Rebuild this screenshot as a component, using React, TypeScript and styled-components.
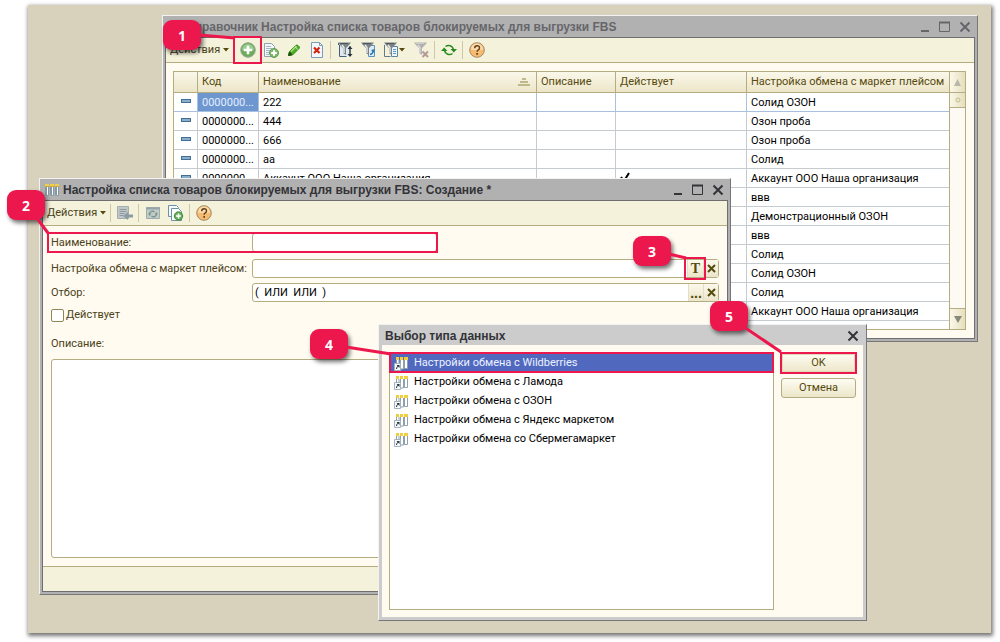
import React from 'react';
import styled, { createGlobalStyle, css } from 'styled-components';

const accent = '#ec174c';
const line = '#b5ac82';
const ink = '#4a4219';

const GlobalStyle = createGlobalStyle`
  *, *::before, *::after { box-sizing: border-box; }
  body {
    margin: 0;
    background: #ffffff;
    color: #000000;
    font: 11px/18px Roboto, "Liberation Sans", sans-serif;
  }
  button, input, textarea { font: inherit; color: inherit; margin: 0; padding: 0; }
`;

const marked = css`
  outline: 2px solid ${accent};
  z-index: 1;
`;

const Page = styled.main`
  display: flex;
  min-height: 100vh;
  padding: 5px 9px 9px 28px;
`;

const Desktop = styled.div`
  position: relative;
  flex: 1;
  min-width: 940px;
  min-height: 620px;
  background: #d8d2bc;
  box-shadow: 1px 2px 4px 1px #777777;
`;

/* Windows */

const Frame = styled.section<{ $light?: boolean }>`
  position: absolute;
  display: flex;
  flex-direction: column;
  padding: ${(p) => (p.$light ? '0 3px 3px' : '0 2px 2px')};
  background: ${(p) => (p.$light ? '#cccccc' : '#b1b1b1')};
  border: 1px solid #77777a;
  border-top-color: #f2f2f2;
  border-left-color: #f2f2f2;
`;

const CatalogFrame = styled(Frame)`
  top: 10px;
  left: 134px;
  right: 13px;
`;

const FormFrame = styled(Frame)`
  top: 173px;
  left: 11px;
  right: 260px;
`;

const PickerFrame = styled(Frame)`
  top: 319px;
  right: 124px;
  width: 489px;
`;

const TitleBar = styled.header<{ $inactive?: boolean; $compact?: boolean }>`
  display: flex;
  align-items: center;
  gap: 4px;
  height: ${(p) => (p.$compact ? 20 : 21)}px;
  padding: 1px 2px 0 3px;
  color: ${(p) => (p.$inactive ? '#66666a' : '#333338')};
`;

const Title = styled.h2`
  flex: 1;
  margin: 0;
  font: bold 12px/20px "Liberation Sans", Arial, sans-serif;
  white-space: nowrap;
`;

const TitleButtons = styled.div`
  display: flex;
  gap: 4px;
`;

const TitleButton = styled.button`
  display: flex;
  width: 16px;
  height: 16px;
  align-items: center;
  justify-content: center;
  border: 0;
  background: none;
`;

const Client = styled.div<{ $plain?: boolean }>`
  display: flex;
  flex-direction: column;
  background: #fffbf0;
  border: ${(p) => (p.$plain ? '0' : '1px solid #6f6f72')};
`;

/* Toolbar */

const Toolbar = styled.div`
  display: flex;
  align-items: center;
  height: 25px;
  background: #f5f2dc;
  border-bottom: 1px solid ${line};
`;

const MenuButton = styled.button`
  display: flex;
  align-items: center;
  justify-content: space-between;
  width: 65px;
  height: 22px;
  padding: 0 2px 0 4px;
  border: 0;
  background: none;
  color: ${ink};
`;

const ToolButton = styled.button<{ $marked?: boolean; $menu?: boolean }>`
  position: relative;
  display: flex;
  align-items: center;
  justify-content: center;
  width: ${(p) => (p.$menu ? 30 : 23)}px;
  height: 22px;
  border: 0;
  background: none;
  ${(p) => p.$marked && css`${marked} outline-offset: 1px;`}
`;

const Separator = styled.span`
  width: 1px;
  height: 18px;
  margin: 0 2px;
  background: #cdc7a6;
`;

/* Catalog table */

const CatalogBody = styled.div`
  display: flex;
  margin: 8px 8px 8px 7px;
  border: 1px solid ${line};
  background: #ffffff;
`;

const GridViewport = styled.div`
  flex: 1;
  height: 257px;
  overflow: hidden;
`;

const Grid = styled.table`
  width: 100%;
  table-layout: fixed;
  border-collapse: separate;
  border-spacing: 0;
`;

const HeadCell = styled.th<{ $width?: number }>`
  width: ${(p) => (p.$width ? `${p.$width}px` : 'auto')};
  height: 21px;
  padding: 0 4px;
  border-right: 1px solid ${line};
  border-bottom: 1px solid ${line};
  background: linear-gradient(#faf8ea, #ece5c8);
  color: #574a0e;
  font-weight: 400;
  text-align: left;
  white-space: nowrap;
  &:last-child { border-right: 0; }
`;

const HeadSorted = styled.span`
  display: flex;
  align-items: center;
  justify-content: space-between;
  padding-right: 2px;
`;

const Cell = styled.td<{ $current?: boolean; $selected?: boolean }>`
  height: 19px;
  padding: 2px 4px 0;
  line-height: 16px;
  overflow: hidden;
  white-space: nowrap;
  border-right: 1px solid ${(p) => (p.$current ? '#a9c1e0' : '#c6cbd0')};
  border-bottom: 1px solid ${(p) => (p.$current ? '#a9c1e0' : '#c6cbd0')};
  background: ${(p) => (p.$selected ? '#6e97cf' : '#ffffff')};
  color: ${(p) => (p.$selected ? '#e4eeff' : '#000000')};
  &:last-child { border-right: 0; }
`;

const Dash = styled.span`
  display: block;
  width: 10px;
  height: 4px;
  margin: 0 auto 4px 3px;
  border: 1px solid #456f92;
  background: #87b0cf;
`;

const ScrollBar = styled.div`
  display: flex;
  flex-direction: column;
  width: 16px;
  border-left: 1px solid ${line};
  background: #fcfaf3;
`;

const ScrollButton = styled.button<{ $height: number; $end?: boolean }>`
  display: flex;
  align-items: center;
  justify-content: center;
  height: ${(p) => p.$height}px;
  border: 0 solid ${line};
  border-width: ${(p) => (p.$end ? '1px 0 0' : '0 0 1px')};
  margin-top: ${(p) => (p.$end ? 'auto' : '0')};
  background: linear-gradient(90deg, #faf8e8, #e6dfbd);
`;

/* Item form */

const Form = styled.form`
  display: flex;
  flex-direction: column;
  padding: 6px 8px 8px;
  color: ${ink};
`;

const FieldRow = styled.div<{ $marked?: boolean }>`
  position: relative;
  display: grid;
  grid-template-columns: 201px 1fr;
  align-items: center;
  margin-bottom: 5px;
  white-space: nowrap;
  ${(p) => p.$marked && css`
    ${marked}
    outline-offset: -2px;
    height: 21px;
    margin: 0 281px 6px -4px;
    padding: 0 1px 0 4px;
  `}
`;

const FieldBox = styled.div`
  display: flex;
  height: 19px;
  border: 1px solid ${line};
  border-radius: 3px;
  background: #ffffff;
`;

const TextInput = styled.input`
  flex: 1;
  min-width: 0;
  padding: 0 2px;
  border: 0;
  background: none;
  color: #000000;
  white-space: pre;
`;

const FieldButton = styled.button<{ $marked?: boolean; $serif?: boolean }>`
  position: relative;
  display: flex;
  flex: none;
  width: ${(p) => (p.$serif ? 16 : 15)}px;
  align-items: center;
  justify-content: center;
  border: 0;
  border-left: 1px solid #e4dfc4;
  background: linear-gradient(#fbf9ec, #ebe5c9);
  color: #574a0e;
  font: ${(p) => (p.$serif ? 'bold 14px/16px "Liberation Serif"' : 'bold 14px/16px "Liberation Sans"')}, serif;
  ${(p) => p.$marked && css`${marked} outline-offset: 1px;`}
`;

const CheckRow = styled.div`
  display: flex;
  align-items: center;
  gap: 2px;
  height: 16px;
  margin-bottom: 12px;
`;

const CheckBox = styled.input`
  appearance: none;
  width: 13px;
  height: 13px;
  border: 1px solid #8f8657;
  border-radius: 2px;
  background: #ffffff;
`;

const NotesLabel = styled.label`
  height: 24px;
`;

const Notes = styled.textarea`
  height: 199px;
  border: 1px solid ${line};
  border-radius: 3px;
  background: #ffffff;
  resize: none;
`;

const FormFooter = styled.footer`
  height: 25px;
  border-top: 1px solid ${line};
  background: #f5f2dc;
`;

/* Type picker */

const PickerBody = styled.div`
  display: flex;
  align-items: flex-start;
  gap: 7px;
  padding: 7px;
`;

const TypeList = styled.ul`
  flex: 1;
  height: 258px;
  margin: 0;
  padding: 0;
  border: 1px solid ${line};
  background: #ffffff;
  list-style: none;
`;

const TypeItem = styled.li<{ $selected?: boolean }>`
  position: relative;
  display: flex;
  align-items: center;
  gap: 5px;
  height: 19px;
  padding: 1px 4px 0;
  color: ${(p) => (p.$selected ? '#eef1ff' : '#000000')};
  background: ${(p) => (p.$selected ? '#5069bf' : 'transparent')};
  ${(p) => p.$selected && css`${marked} outline-offset: -1px;`}
`;

const Actions = styled.div`
  display: flex;
  flex-direction: column;
  gap: 5px;
  width: 75px;
  padding-top: 1px;
`;

const ActionButton = styled.button<{ $marked?: boolean }>`
  position: relative;
  height: 20px;
  border: 1px solid ${line};
  border-radius: 3px;
  background: linear-gradient(#fdfcf2, #ece6c9);
  color: #574a0e;
  ${(p) => p.$marked && css`
    border-radius: 0;
    box-shadow: inset 0 0 0 1px #e0d9b8;
    ${marked}
    outline-offset: -1px;
  `}
`;

/* Numbered callouts lying over the windows */

const Callout = styled.div`
  position: absolute;
  z-index: 2;
  width: 38px;
  height: 30px;
  border-radius: 9px;
  background: ${accent};
  box-shadow: 2px 3px 4px rgba(0, 0, 0, 0.55);
  color: #ffffff;
  font: bold 14px/31px "Open Sans", "Noto Sans", sans-serif;
  text-align: center;
`;

const CalloutActions = styled(Callout)` top: 4px; left: 0; `;
const CalloutName = styled(Callout)` top: 11px; left: -33px; `;
const CalloutType = styled(Callout)` top: 57px; right: 59px; `;
const CalloutItem = styled(Callout)` top: 4px; left: -69px; `;
const CalloutOk = styled(Callout)` top: -24px; right: 118px; `;

const Pointer = styled.svg`
  position: absolute;
  top: 0;
  left: 0;
  overflow: visible;
  z-index: -1;
`;

function PointerLine({ from, to }: { from: [number, number]; to: [number, number] }) {
  return (
    <Pointer width="38" height="30" aria-hidden="true">
      <line x1={from[0]} y1={from[1]} x2={to[0]} y2={to[1]} stroke={accent} strokeWidth="3" />
    </Pointer>
  );
}

/* Icons */

const Icon = ({ children, w = 16, h = 16 }: { children: React.ReactNode; w?: number; h?: number }) => (
  <svg width={w} height={h} viewBox={`0 0 ${w} ${h}`} fill="none" aria-hidden="true">{children}</svg>
);

const Caret = () => <Icon w={6} h={4}><path d="M0 0h6L3 3.500z" fill="#574a0e" /></Icon>;

const MinimizeIcon = () => <Icon><path d="M4 12h8" stroke="currentColor" strokeWidth="2" /></Icon>;
const MaximizeIcon = () => (
  <Icon><path d="M2.500 3.500h10v9h-10z" stroke="currentColor" /><path d="M2 3.500h11" stroke="currentColor" strokeWidth="2" /></Icon>
);
const CloseIcon = () => <Icon><path d="M3.500 3.500l9 9M12.500 3.500l-9 9" stroke="currentColor" strokeWidth="2" /></Icon>;

const AddIcon = () => (
  <Icon>
    <circle cx="8" cy="8" r="7.300" fill="#6cab5e" stroke="#9aa892" />
    <path d="M2 8a6 6 0 0 1 12 0q-6 2-12 0z" fill="#9ccb90" />
    <path d="M8 3.800v8.400M3.800 8h8.400" stroke="#ffffff" strokeWidth="2.600" />
  </Icon>
);

const CopyAddIcon = () => (
  <Icon>
    <path d="M1.500 1.500h7l3 3v10h-10z" fill="#f3f7fa" stroke="#8ea2b2" />
    <path d="M3 4.500h5M3 6.500h6M3 8.500h6M3 10.500h4M3 12.500h3" stroke="#a5b6c4" />
    <circle cx="11" cy="11" r="4.500" fill="#7dba6e" stroke="#649a59" />
    <path d="M11 8.200v5.600M8.200 11h5.600" stroke="#ffffff" strokeWidth="2" />
  </Icon>
);

const PencilIcon = () => (
  <Icon>
    <path d="M2.500 13.500l1-4 6.500-6q1-1 2 0l1 1q1 1 0 2l-6.500 6.500z" fill="#4fae26" stroke="#2c8a12" />
    <path d="M5 9.500l5.500-5.200" stroke="#a2e07c" strokeWidth="1.500" />
    <path d="M2 14l1-4.200 1.500.6 1 1 .7 1.600z" fill="#1d4a10" />
    <path d="M9.200 4.800l2.600 2.600" stroke="#d5efc6" />
  </Icon>
);

const DeleteIcon = () => (
  <Icon>
    <path d="M2.500 .5h8l3 3v12h-11z" fill="#f2f8fc" stroke="#7c9cb8" />
    <path d="M10.500 .5v3h3" stroke="#7c9cb8" />
    <path d="M5 5.500l5.500 5.500M10.500 5.500L5 11" stroke="#d3240c" strokeWidth="2.200" />
  </Icon>
);

const Funnel = ({ faded }: { faded?: boolean }) => (
  <>
    <path d="M1 .5h13l-1.500 2-3.500 3.500v7l-3-2V6L2.500 2.500z" fill={faded ? '#b0b0b0' : '#7b8286'} />
    <path d="M3 1.500h8" stroke={faded ? '#cccccc' : '#4d565b'} />
    <path d="M5 3l2 2.500V11" stroke={faded ? '#dddddd' : '#e9edef'} strokeWidth="1.400" />
  </>
);

const FilterSortIcon = () => (
  <Icon>
    <path d="M2.500 3v11.500h7M1.500 3v-2M2 8h3M2 11h3" stroke="#3f617c" />
    <path d="M3 4h9v10H3z" fill="#dfe9ef" />
    <Funnel />
    <path d="M13 4.500v9" stroke="#26343e" strokeWidth="1.400" />
    <path d="M10.500 7L13 4l2.500 3zM10.500 12l2.500 3 2.500-3z" fill="#26343e" />
  </Icon>
);
const FilterCurrentIcon = () => (
  <Icon>
    <path d="M8.500 3.500h6v11h-6z" fill="#dcebf5" stroke="#5d93bd" />
    <path d="M10 12.500q3-.5 3-4" stroke="#2f78b4" strokeWidth="1.400" />
    <path d="M11 8l4-1-1 4z" fill="#2f78b4" />
    <Funnel />
  </Icon>
);
const FilterListIcon = () => (
  <Icon>
    <path d="M1.500 3v11.500h6" stroke="#64798a" />
    <path d="M8.500 4.500h6v10h-6z" fill="#eef5fa" stroke="#5d84a5" />
    <path d="M10 7.500h3M10 9.500h3M10 11.500h3" stroke="#5b97c6" />
    <Funnel />
  </Icon>
);
const FilterOffIcon = () => (
  <Icon>
    <Funnel faded />
    <path d="M9.500 9.500l5.500 5.500M15 9.500L9.500 15" stroke="#b49a97" strokeWidth="2" />
  </Icon>
);

const RefreshIcon = ({ color = '#278a1c' }: { color?: string }) => (
  <Icon>
    <path d="M4.500 4.500A5 5 0 0 1 12.500 7.500M11.500 11.500A5 5 0 0 1 3.500 8.500" stroke={color} strokeWidth="1.500" />
    <path d="M9.500 7H16l-3.200 3.500zM0 9h6.500L3.200 5.500z" fill={color} />
  </Icon>
);

const HelpIcon = () => (
  <Icon>
    <circle cx="8" cy="8" r="7.300" fill="#f6bb72" stroke="#a58a63" />
    <path d="M2 7.500a6 6 0 0 1 12 0q-6 1.500-12 0z" fill="#fbdcae" />
    <path d="M5.700 6.200q0-2.500 2.400-2.500t2.400 2.200q0 1.200-1.200 1.900T8.100 9.800" stroke="#654117" strokeWidth="1.500" />
    <path d="M7.300 11h1.700v1.700H7.300z" fill="#654117" />
  </Icon>
);

const SaveCloseIcon = () => (
  <Icon>
    <path d="M.5 1.500h11v12H.5z" fill="#c0c7c8" stroke="#a4aeb1" />
    <path d="M2.500 4.500h7M2.500 6.500h7M2.500 8.500h5M2.500 10.500h4" stroke="#8f9a9e" />
    <path d="M6 11l5-4v2.500h5v3h-5V15z" fill="#8d9ba4" />
  </Icon>
);

const RereadIcon = () => (
  <Icon>
    <path d="M1.500 2.500h13v11h-13z" fill="#c3cbc9" stroke="#a0acae" />
    <path d="M1 3.500h14" stroke="#95a4aa" strokeWidth="2" />
    <path d="M4.500 9a3 3 0 0 1 5-2M11.500 9a3 3 0 0 1-5 2" stroke="#799a88" strokeWidth="1.400" />
    <path d="M3 8.500h3.500L4.500 11zM9.500 9.500H13L11.500 7z" fill="#799a88" />
  </Icon>
);

const StackAddIcon = () => (
  <Icon>
    <path d="M.5.5h8l2 2v9H.5z" fill="#f5f9fa" stroke="#6d91a8" />
    <path d="M3.500 3.500h7l3 3v9h-10z" fill="#ffffff" stroke="#6d91a8" />
    <circle cx="10.500" cy="11" r="4.200" fill="#68ad58" stroke="#3f8a35" />
    <path d="M10.500 8.500v5M8 11h5" stroke="#ffffff" strokeWidth="1.600" />
  </Icon>
);

const TableIcon = () => (
  <Icon w={14} h={14}>
    <path d="M1.500 4v8.500h2V4M6.500 4v8.500h2V4M11.500 4v8.500h2V4M.5 4v8.500M5.500 4v8.500M10.500 4v8.500" fill="#ffffff" stroke="#8497a4" />
    <path d="M0 1h4v3H0zM5 1h4v3H5zM10 1h4v3h-4z" fill="#f0d047" />
    <path d="M0 3.500h4M5 3.500h4M10 3.500h4" stroke="#c9a92c" />
  </Icon>
);
const TypeIcon = () => (
  <Icon w={15} h={15}>
    <path d="M2.500 4v8h2.500V4M6.500 4v9h3V4M10.500 4v8.500h3V4" fill="#ffffff" stroke="#8fa0ab" />
    <path d="M2 1h3v3H2zM6 1h3v3H6zM10 1h4v3h-4z" fill="#f0cf3f" />
    <path d="M.5 7.500h6v7h-6z" fill="#f7fafc" stroke="#a3b2bd" />
    <path d="M2.500 9h3v3z" fill="#28333c" />
    <path d="M2.500 13q-.3-2 2-3" stroke="#28333c" />
  </Icon>
);

const SortIcon = () => (
  <Icon w={12} h={8}><path d="M4 1h4M2 4h8M0 7h12" stroke="#b0a672" strokeWidth="1.600" /></Icon>
);
const CheckIcon = () => <Icon w={11} h={10}><path d="M1 5l3 4 5-8" stroke="#000000" strokeWidth="2" /></Icon>;
const CrossIcon = () => <Icon w={9} h={9}><path d="M1 1l7 7M8 1L1 8" stroke="#574a0e" strokeWidth="2" /></Icon>;

const rows: { code: string; name: string; active?: boolean; market: string }[] = [
  { code: '0000000...', name: '222', market: 'Солид ОЗОН' },
  { code: '0000000...', name: '444', market: 'Озон проба' },
  { code: '0000000...', name: '666', market: 'Озон проба' },
  { code: '0000000...', name: 'аа', market: 'Солид' },
  { code: '0000000...', name: 'Аккаунт ООО Наша организация', active: true, market: 'Аккаунт ООО Наша организация' },
  { code: '', name: '', market: 'ввв' },
  { code: '', name: '', market: 'Демонстрационный ОЗОН' },
  { code: '', name: '', market: 'ввв' },
  { code: '', name: '', market: 'Солид' },
  { code: '', name: '', market: 'Солид ОЗОН' },
  { code: '', name: '', market: 'Солид' },
  { code: '', name: '', market: 'Аккаунт ООО Наша организация' },
  { code: '', name: '', market: '' },
];

const types = [
  'Настройки обмена с Wildberries',
  'Настройки обмена с Ламода',
  'Настройки обмена с ОЗОН',
  'Настройки обмена с Яндекс маркетом',
  'Настройки обмена со Сбермегамаркет',
];

function WindowButtons({ closeOnly }: { closeOnly?: boolean }) {
  return (
    <TitleButtons>
      {!closeOnly && <TitleButton type="button"><MinimizeIcon /></TitleButton>}
      {!closeOnly && <TitleButton type="button"><MaximizeIcon /></TitleButton>}
      <TitleButton type="button"><CloseIcon /></TitleButton>
    </TitleButtons>
  );
}

function CatalogWindow() {
  return (
    <CatalogFrame>
      <TitleBar $inactive>
        <TableIcon />
        <Title>Справочник Настройка списка товаров блокируемых для выгрузки FBS</Title>
        <WindowButtons />
      </TitleBar>
      <Client>
        <Toolbar>
          <MenuButton type="button">Действия<Caret /></MenuButton>
          <Separator />
          <ToolButton type="button" $marked><AddIcon /></ToolButton>
          <ToolButton type="button"><CopyAddIcon /></ToolButton>
          <ToolButton type="button"><PencilIcon /></ToolButton>
          <ToolButton type="button"><DeleteIcon /></ToolButton>
          <Separator />
          <ToolButton type="button"><FilterSortIcon /></ToolButton>
          <ToolButton type="button"><FilterCurrentIcon /></ToolButton>
          <ToolButton type="button" $menu><FilterListIcon /><Caret /></ToolButton>
          <ToolButton type="button"><FilterOffIcon /></ToolButton>
          <Separator />
          <ToolButton type="button"><RefreshIcon /></ToolButton>
          <Separator />
          <ToolButton type="button"><HelpIcon /></ToolButton>
        </Toolbar>
        <CatalogBody>
          <GridViewport>
            <Grid>
              <thead>
                <tr>
                  <HeadCell $width={24} />
                  <HeadCell $width={61}>Код</HeadCell>
                  <HeadCell><HeadSorted>Наименование<SortIcon /></HeadSorted></HeadCell>
                  <HeadCell $width={79}>Описание</HeadCell>
                  <HeadCell $width={131}>Действует</HeadCell>
                  <HeadCell $width={202}>Настройка обмена с маркет плейсом</HeadCell>
                </tr>
              </thead>
              <tbody>
                {rows.map((row, i) => (
                  <tr key={i}>
                    <Cell $current={i === 0}><Dash /></Cell>
                    <Cell $current={i === 0} $selected={i === 0}>{row.code}</Cell>
                    <Cell $current={i === 0}>{row.name}</Cell>
                    <Cell $current={i === 0} />
                    <Cell $current={i === 0}>{row.active && <CheckIcon />}</Cell>
                    <Cell $current={i === 0}>{row.market}</Cell>
                  </tr>
                ))}
              </tbody>
            </Grid>
          </GridViewport>
          <ScrollBar>
            <ScrollButton type="button" $height={21}><Icon w={7} h={7}><path d="M0 7h7L3.500 0z" fill="#b9b8a8" /></Icon></ScrollButton>
            <ScrollButton type="button" $height={15}><Icon w={6} h={6}><circle cx="3" cy="3" r="2" stroke="#c2b98c" /></Icon></ScrollButton>
            <ScrollButton type="button" $height={21} $end><Icon w={8} h={7}><path d="M0 0h8L4 7z" fill="#88887c" /></Icon></ScrollButton>
          </ScrollBar>
        </CatalogBody>
      </Client>
      <CalloutActions><PointerLine from={[36, 15]} to={[72, 18]} />1</CalloutActions>
    </CatalogFrame>
  );
}

function FormWindow() {
  return (
    <FormFrame>
      <TitleBar>
        <TableIcon />
        <Title>Настройка списка товаров блокируемых для выгрузки FBS: Создание *</Title>
        <WindowButtons />
      </TitleBar>
      <Client>
        <Toolbar>
          <MenuButton type="button">Действия<Caret /></MenuButton>
          <Separator />
          <ToolButton type="button"><SaveCloseIcon /></ToolButton>
          <Separator />
          <ToolButton type="button"><RereadIcon /></ToolButton>
          <ToolButton type="button"><StackAddIcon /></ToolButton>
          <Separator />
          <ToolButton type="button"><HelpIcon /></ToolButton>
        </Toolbar>
        <Form>
          <FieldRow $marked>
            <label htmlFor="name">Наименование:</label>
            <FieldBox><TextInput id="name" /></FieldBox>
          </FieldRow>
          <FieldRow>
            <label htmlFor="market">Настройка обмена с маркет плейсом:</label>
            <FieldBox>
              <TextInput id="market" />
              <FieldButton type="button" $serif $marked>T</FieldButton>
              <FieldButton type="button"><CrossIcon /></FieldButton>
            </FieldBox>
          </FieldRow>
          <FieldRow>
            <label htmlFor="filter">Отбор:</label>
            <FieldBox>
              <TextInput id="filter" defaultValue="(  ИЛИ  ИЛИ  )" />
              <FieldButton type="button">...</FieldButton>
              <FieldButton type="button"><CrossIcon /></FieldButton>
            </FieldBox>
          </FieldRow>
          <CheckRow>
            <CheckBox type="checkbox" id="active" />
            <label htmlFor="active">Действует</label>
          </CheckRow>
          <NotesLabel htmlFor="notes">Описание:</NotesLabel>
          <Notes id="notes" />
        </Form>
        <FormFooter />
      </Client>
      <CalloutName><PointerLine from={[29, 27]} to={[41, 43]} />2</CalloutName>
      <CalloutType><PointerLine from={[36, 18]} to={[53, 22]} />3</CalloutType>
    </FormFrame>
  );
}

function PickerWindow() {
  return (
    <PickerFrame $light>
      <TitleBar $compact>
        <Title>Выбор типа данных</Title>
        <WindowButtons closeOnly />
      </TitleBar>
      <Client $plain>
        <PickerBody>
          <TypeList>
            {types.map((name, i) => (
              <TypeItem key={name} $selected={i === 0}><TypeIcon />{name}</TypeItem>
            ))}
          </TypeList>
          <Actions>
            <ActionButton type="button" $marked>OK</ActionButton>
            <ActionButton type="button">Отмена</ActionButton>
          </Actions>
        </PickerBody>
      </Client>
      <CalloutItem><PointerLine from={[36, 18]} to={[81, 25]} />4</CalloutItem>
      <CalloutOk><PointerLine from={[34, 26]} to={[71, 51]} />5</CalloutOk>
    </PickerFrame>
  );
}

export default function App() {
  return (
    <Page>
      <GlobalStyle />
      <Desktop>
        <CatalogWindow />
        <FormWindow />
        <PickerWindow />
      </Desktop>
    </Page>
  );
}
